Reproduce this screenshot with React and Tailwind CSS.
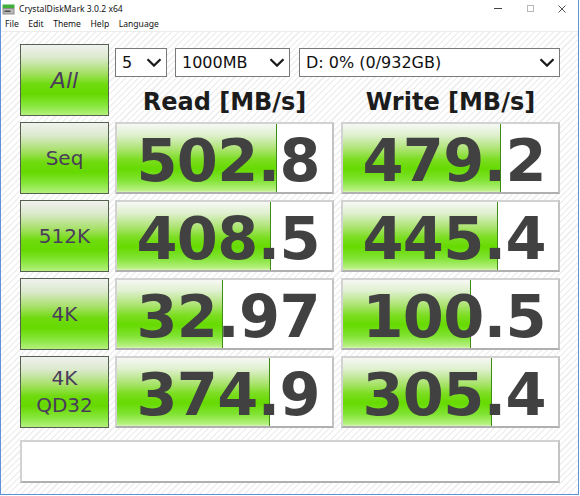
import React from "react";

const rows = [
  { label: ["Seq"], read: "502.8", write: "479.2", rw: 160, ww: 158 },
  { label: ["512K"], read: "408.5", write: "445.4", rw: 154, ww: 155 },
  { label: ["4K"], read: "32.97", write: "100.5", rw: 106, ww: 128 },
  { label: ["4K", "QD32"], read: "374.9", write: "305.4", rw: 153, ww: 149 },
];

function Chevron() {
  return (
    <svg width="16" height="9" viewBox="0 0 16 9" className="shrink-0">
      <polyline points="1.5,1.2 8,7.6 14.5,1.2" fill="none" stroke="#1a1a1a" strokeWidth="2.2" strokeLinejoin="miter" />
    </svg>
  );
}

function Select({ w, text }) {
  return (
    <div
      className={`${w} h-[29px] bg-white border border-[#7a7a7a] flex items-center justify-between pl-[6px] pr-[4px] font-['DejaVu_Sans',sans-serif] text-[16px] text-[#111]`}
    >
      <span className="leading-none">{text}</span>
      <Chevron />
    </div>
  );
}

function Btn({ lines, italic }) {
  return (
    <div className="w-[89px] h-[72px] shrink-0 border border-[#56604e] bg-[linear-gradient(180deg,#f0f2ee_0%,#dbe9cd_18%,#a6e066_40%,#6fdb0e_56%,#66d900_70%,#86e63a_86%,#b4f07e_100%)] flex flex-col items-center justify-center font-['DejaVu_Sans',sans-serif] text-[#4a3c5c]">
      {lines.map((l) => (
        <span
          key={l}
          className={`${italic ? "italic text-[22px]" : "text-[20px]"} leading-[27px]`}
        >
          {l}
        </span>
      ))}
    </div>
  );
}

function Val({ value, bar }) {
  return (
    <div className="relative w-[219px] h-[72px] shrink-0 bg-white border-2 border-[#d2d2d2] border-b-[#b0b0b0] border-r-[#c4c4c4]">
      <div
        className="absolute left-0 top-0 bottom-0 border-r border-[#3f8c12] bg-[linear-gradient(180deg,#f6f8f4_0%,#e0f0d0_16%,#a9e36c_38%,#7cde22_52%,#66da00_66%,#7fe331_82%,#b6f07f_97%,#d6f6b6_100%)]"
        style={{ width: bar }}
      />
      <div className="relative h-full flex items-center justify-end pr-[12px] pt-[6px] font-['DejaVu_Sans',sans-serif] font-bold text-[59px] tracking-[-0.6px] text-[#414141] leading-[62px]">
        {value}
      </div>
    </div>
  );
}

function DiskIcon() {
  return (
    <svg width="13" height="11" viewBox="0 0 13 11">
      <rect x="0.5" y="0.5" width="12" height="3.5" fill="#3fae3a" />
      <rect x="0.5" y="4" width="12" height="6.5" fill="#8c8c8c" />
      <rect x="1.5" y="5" width="10" height="4.5" fill="#b9b9b9" />
      <rect x="2.5" y="6.5" width="6" height="1.5" fill="#4a4a4a" />
    </svg>
  );
}

export default function App() {
  return (
    <div className="w-[580px] h-[496px] bg-white overflow-hidden">
      <div className="w-[579px] h-[495px] border-x border-b border-[#5f92d8] flex flex-col">
        {/* title bar */}
        <div className="h-[17px] flex items-center justify-between shrink-0">
          <div className="flex items-center pl-[1px] pt-[1px]">
            <DiskIcon />
            <span className="ml-[4px] font-['Noto_Sans',sans-serif] text-[8.6px] text-[#111] leading-none">
              CrystalDiskMark 3.0.2 x64
            </span>
          </div>
          <div className="flex h-full">
            <div className="w-[32px] flex items-center justify-center">
              <div className="w-[8px] h-px bg-[#444]" />
            </div>
            <div className="w-[32px] flex items-center justify-center">
              <div className="w-[7px] h-[7px] border border-[#b8b8b8]" />
            </div>
            <div className="w-[32px] flex items-center justify-center">
              <svg width="8" height="8" viewBox="0 0 8 8">
                <path d="M0.5 0.5 L7.5 7.5 M7.5 0.5 L0.5 7.5" stroke="#555" strokeWidth="1" />
              </svg>
            </div>
          </div>
        </div>
        {/* menu bar */}
        <div className="h-[15px] shrink-0 flex items-center gap-[9.5px] pl-[4px] border-b border-[#ececec] font-['Noto_Sans',sans-serif] text-[8.6px] text-[#111] leading-none">
          <span>File</span>
          <span>Edit</span>
          <span>Theme</span>
          <span>Help</span>
          <span>Language</span>
        </div>
        {/* content */}
        <div className="flex-1 bg-[image:repeating-linear-gradient(135deg,#ffffff_0px,#ffffff_3px,#f0f0f0_3px,#f0f0f0_4.5px)] pl-[19px] pt-[12px]">
          <div className="flex">
            <Btn lines={["All"]} italic />
            <div className="ml-[6px] w-[445px] flex flex-col">
              <div className="mt-[4px] flex">
                <Select w="w-[52px]" text="5" />
                <div className="ml-[8px]">
                  <Select w="w-[115px]" text="1000MB" />
                </div>
                <div className="ml-[9px]">
                  <Select w="w-[261px]" text="D: 0% (0/932GB)" />
                </div>
              </div>
              <div className="mt-[11px] h-[28px] flex gap-[7px] font-['DejaVu_Sans',sans-serif] font-bold text-[24px] text-[#1c1c1c]">
                <div className="w-[219px] flex items-center justify-center">Read [MB/s]</div>
                <div className="w-[219px] flex items-center justify-center">Write [MB/s]</div>
              </div>
            </div>
          </div>
          {rows.map((r) => (
            <div key={r.read} className="flex mt-[6px]">
              <Btn lines={r.label} />
              <div className="ml-[6px]">
                <Val value={r.read} bar={r.rw} />
              </div>
              <div className="ml-[7px]">
                <Val value={r.write} bar={r.ww} />
              </div>
            </div>
          ))}
          <div className="mt-[12px] w-[540px] h-[43px] bg-white border-2 border-[#d2d2d2] border-b-[#b0b0b0] border-r-[#c4c4c4]" />
        </div>
      </div>
    </div>
  );
}
